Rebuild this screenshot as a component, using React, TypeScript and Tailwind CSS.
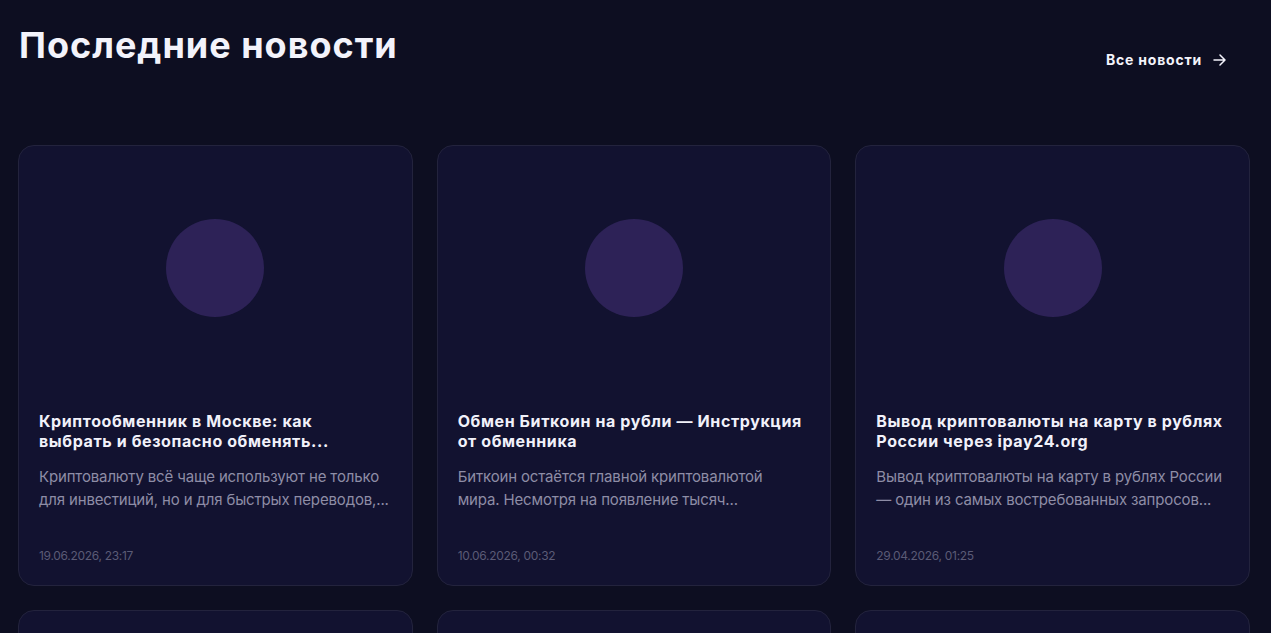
import React from 'react';

const news = [
  {
    title: ['Криптообменник в Москве: как', 'выбрать и безопасно обменять...'],
    text: ['Криптовалюту всё чаще используют не только', 'для инвестиций, но и для быстрых переводов,...'],
    date: '19.06.2026, 23:17',
  },
  {
    title: ['Обмен Биткоин на рубли — Инструкция', 'от обменника'],
    text: ['Биткоин остаётся главной криптовалютой', 'мира. Несмотря на появление тысяч...'],
    date: '10.06.2026, 00:32',
  },
  {
    title: ['Вывод криптовалюты на карту в рублях', 'России через ipay24.org'],
    text: ['Вывод криптовалюты на карту в рублях России', '— один из самых востребованных запросов...'],
    date: '29.04.2026, 01:25',
  },
  { title: [], text: [], date: '' },
  { title: [], text: [], date: '' },
  { title: [], text: [], date: '' },
];

const NewsCard = ({ item }) => (
  <div className="h-[441px] flex flex-col rounded-2xl border border-[#23233d] bg-[#121230]">
    {/* image placeholder */}
    <div className="h-[244px] flex items-center justify-center shrink-0">
      <div className="w-[98px] h-[98px] rounded-full bg-[#2d2257]" />
    </div>
    <div className="flex flex-col flex-1 px-5 pt-[21px] pb-[21px]">
      <h3 className="text-[16px] leading-[20px] font-bold text-[#f1f1fa] tracking-[0.6px]">
        {item.title.map((l, i) => (
          <span key={i} className="block whitespace-nowrap">{l}</span>
        ))}
      </h3>
      <p className="mt-[14px] text-[15px] leading-[23px] text-[#8e8da6] tracking-[-0.15px]">
        {item.text.map((l, i) => (
          <span key={i} className="block whitespace-nowrap">{l}</span>
        ))}
      </p>
      <span className="mt-auto text-[12px] leading-[16px] text-[#5b5b76] tracking-[-0.3px]">{item.date}</span>
    </div>
  </div>
);

const App = () => {
  return (
    <div
      className="min-h-screen bg-[#0d0e21] text-white pl-[18px] pr-[21px]"
      style={{ fontFamily: 'Inter, "Noto Sans", sans-serif' }}
    >
      <div className="h-[145px] flex items-start justify-between">
        <h1 className="mt-[23px] text-[36px] leading-[44px] font-bold text-[#f3f3fb] pl-[1px] tracking-[1px]">Последние новости</h1>
        <a href="#" className="flex items-center gap-[11px] px-6 py-3 mt-[38px] text-[14px] leading-[20px] font-bold text-[#f3f3fb] tracking-[0.8px]">
          Все новости
          <svg width="13" height="12" viewBox="0 0 13 12" fill="none" stroke="currentColor" strokeWidth="1.5" strokeLinecap="round" strokeLinejoin="round">
            <path d="M1 6h11M7 1l5 5-5 5" />
          </svg>
        </a>
      </div>
      <div className="grid grid-cols-3 gap-6 pb-8">
        {news.map((n, i) => (
          <NewsCard key={i} item={n} />
        ))}
      </div>
    </div>
  );
};

export default App;
